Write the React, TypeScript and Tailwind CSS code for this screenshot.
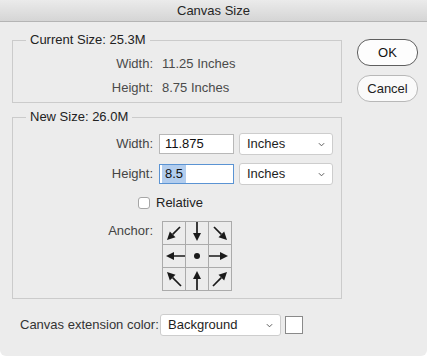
import { FC, ReactNode } from "react";

type Pt = [number, number];

const Arrow: FC<{ from: Pt; to: Pt }> = ({ from, to }) => {
  const [x1, y1] = from;
  const [x2, y2] = to;
  const len = Math.hypot(x2 - x1, y2 - y1);
  const ux = (x2 - x1) / len;
  const uy = (y2 - y1) / len;
  // arrow head base
  const bx = x2 - ux * 8;
  const by = y2 - uy * 8;
  const px = -uy * 4;
  const py = ux * 4;
  return (
    <svg viewBox="0 0 22 22" className="w-[22px] h-[22px]">
      <line x1={x1} y1={y1} x2={bx} y2={by} stroke="#1a1a1a" strokeWidth={1.7} />
      <polygon
        points={`${x2},${y2} ${bx + px},${by + py} ${bx - px},${by - py}`}
        fill="#1a1a1a"
      />
    </svg>
  );
};

const anchors: (null | { from: Pt; to: Pt })[] = [
  { from: [17, 5], to: [4, 18] },
  { from: [11, 0], to: [11, 19] },
  { from: [5, 5], to: [18, 18] },
  { from: [22, 11], to: [3, 11] },
  null,
  { from: [0, 11], to: [19, 11] },
  { from: [18, 18], to: [4, 4] },
  { from: [11, 22], to: [11, 3] },
  { from: [4, 18], to: [18, 4] },
];

const Chevron = () => (
  <svg viewBox="0 0 8 5" className="w-[7px] h-[5px]">
    <path d="M1 1 L4 4 L7 1" fill="none" stroke="#555" strokeWidth={1.1} />
  </svg>
);

const Select: FC<{ value: string; className: string }> = ({ value, className }) => (
  <div
    className={`h-[22px] bg-white border border-[#cdcdcd] rounded-[3px] flex items-center justify-between pl-[7px] pr-[7px] text-[#1e1e1e] ${className}`}
  >
    <span>{value}</span>
    <Chevron />
  </div>
);

const Row: FC<{ label: string; children: ReactNode; className?: string }> = ({
  label,
  children,
  className = "",
}) => (
  <div className={`flex items-center h-[22px] ${className}`}>
    <span className="w-[140px] text-right text-[#444]">{label}</span>
    {children}
  </div>
);

export default function App() {
  return (
    <div className="w-[427px] h-[356px] bg-[#ececec] rounded-b-[6px] overflow-hidden font-['Liberation_Sans',Arial,sans-serif] text-[13px] text-[#333]">
      <div className="h-[22px] flex items-center justify-center border-b border-[#b4b4b4] bg-linear-to-b from-[#ebebeb] to-[#d5d5d5] text-[#262626]">
        Canvas Size
      </div>
      <div className="flex pl-[12px] pt-[10px]">
        <div className="w-[330px] shrink-0 flex flex-col">
          <fieldset className="border border-[#cbcbcb]">
            <legend className="ml-[13px] px-[4px] leading-[16px] text-[#222]">
              Current Size: 25.3M
            </legend>
            <div className="pt-[4px] pb-[2px]">
              {[
                ["Width:", "11.25 Inches"],
                ["Height:", "8.75 Inches"],
              ].map(([label, value]) => (
                <div key={label} className="flex items-center h-[24px]">
                  <span className="w-[140px] text-right text-[#4a4a4a]">{label}</span>
                  <span className="ml-[9px] text-[#4a4a4a]">{value}</span>
                </div>
              ))}
            </div>
          </fieldset>

          <fieldset className="mt-[6px] border border-[#cbcbcb]">
            <legend className="ml-[13px] px-[4px] leading-[16px] text-[#222]">
              New Size: 26.0M
            </legend>
            <div className="pt-[8px] pb-[7px] flex flex-col">
              <Row label="Width:">
                <div className="ml-[6px] w-[75px] h-[20px] bg-white border border-[#b8b8b8] flex items-center pl-[5px] text-[#111]">
                  11.875
                </div>
                <Select value="Inches" className="ml-[5px] w-[94px]" />
              </Row>
              <Row label="Height:" className="mt-[8px]">
                <div className="ml-[6px] w-[75px] h-[20px] bg-white border border-[#5a93d3] flex items-center pl-[2px] text-[#111]">
                  <span className="bg-[#b2cdee] h-full flex items-center px-[3px]">8.5</span>
                </div>
                <Select value="Inches" className="ml-[5px] w-[94px]" />
              </Row>
              <div className="mt-[10px] h-[16px] flex items-center pl-[125px]">
                <div className="w-[12px] h-[12px] bg-white border border-[#a6a6a6] rounded-[3px]" />
                <span className="ml-[6px] text-[#222]">Relative</span>
              </div>
              <div className="mt-[10px] flex">
                <span className="w-[140px] text-right text-[#444] pt-[2px] leading-[15px]">
                  Anchor:
                </span>
                <div className="ml-[9px] grid grid-cols-[repeat(3,23px)] border-l border-t border-[#ababab]">
                  {anchors.map((a, i) => (
                    <div
                      key={i}
                      className="w-[23px] h-[23px] border-r border-b border-[#ababab] flex items-center justify-center"
                    >
                      {a ? (
                        <Arrow from={a.from} to={a.to} />
                      ) : (
                        <div className="w-[6px] h-[6px] rounded-full bg-[#1a1a1a]" />
                      )}
                    </div>
                  ))}
                </div>
              </div>
            </div>
          </fieldset>

          <div className="mt-[15px] flex items-center h-[22px]">
            <span className="ml-[8px] w-[140px] text-[#333]">Canvas extension color:</span>
            <Select value="Background" className="w-[121px]" />
            <div className="ml-[4px] w-[18px] h-[18px] bg-white border border-[#8a8a8a]" />
          </div>
        </div>

        <div className="ml-[15px] mt-[7px] shrink-0 flex flex-col">
          <button className="w-[61px] h-[27px] rounded-[13px] bg-[#fdfdfd] border border-[#5e5e5e] text-[#111]">
            OK
          </button>
          <button className="mt-[9px] w-[61px] h-[27px] rounded-[13px] bg-[#fafafa] border border-[#b8b8b8] text-[#222]">
            Cancel
          </button>
        </div>
      </div>
    </div>
  );
}
